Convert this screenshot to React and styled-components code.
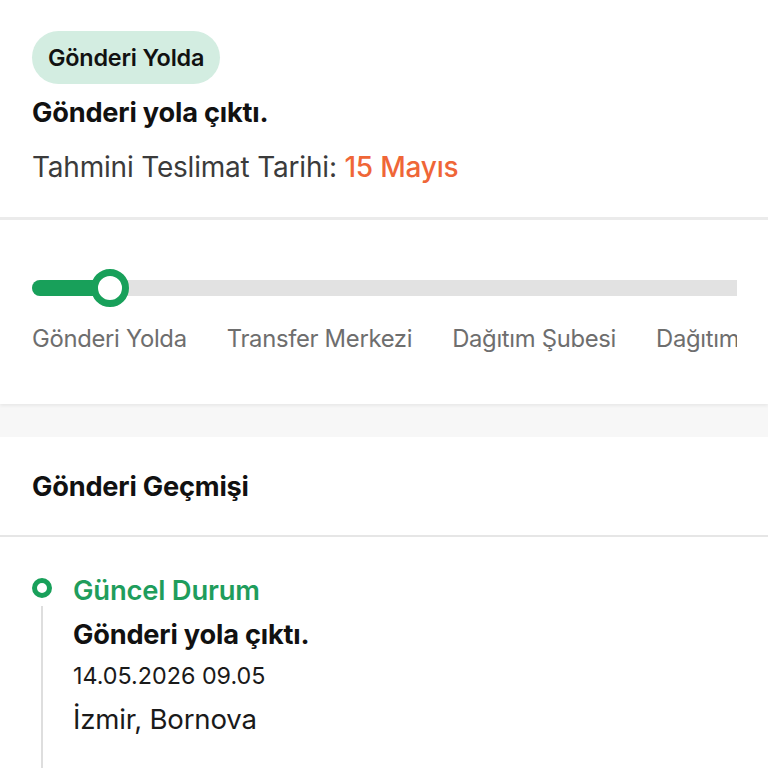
import React from 'react'
import styled, { createGlobalStyle } from 'styled-components';

const GlobalStyle = createGlobalStyle`
  html, body {
    margin: 0;
    padding: 0;
    background: #ffffff;
    font-family: Inter, "Noto Sans", sans-serif;
    color: #111111;
  }
`;

const steps = ['Gönderi Yolda', 'Transfer Merkezi', 'Dağıtım Şubesi', 'Dağıtımda', 'Teslim Edildi'];

const App = () => {
  return (
    <>
      <GlobalStyle />
      <Sayfa>
        <Ozet>
          <Rozet>Gönderi Yolda</Rozet>
          <Baslik>Gönderi yola çıktı.</Baslik>
          <Tahmin>
            Tahmini Teslimat Tarihi: <Tarih>15 Mayıs</Tarih>
          </Tahmin>
        </Ozet>

        <Ilerleme>
          <Ray>
            <Dolgu $oran={11}>
              <Nokta />
            </Dolgu>
          </Ray>
          <Adimlar>
            {steps.map((s) => (
              <Adim key={s}>{s}</Adim>
            ))}
          </Adimlar>
        </Ilerleme>

        <Ara />

        <GecmisBaslik>Gönderi Geçmişi</GecmisBaslik>

        <Zaman>
          <Olay>
            <Isaret>
              <Halka />
              <Cizgi />
            </Isaret>
            <OlayIcerik>
              <Durum>Güncel Durum</Durum>
              <OlayBaslik>Gönderi yola çıktı.</OlayBaslik>
              <OlayTarih>14.05.2026 09.05</OlayTarih>
              <OlayYer>İzmir, Bornova</OlayYer>
            </OlayIcerik>
          </Olay>
        </Zaman>
      </Sayfa>
    </>
  )
}

export default App;

const Sayfa = styled.div`
width: 768px;
min-height: 768px;
overflow: hidden;
background: #fff;
`;

const Ozet = styled.section`
display: flex;
flex-direction: column;
align-items: flex-start;
padding: 31px 32px 0 32px;
height: 186px;
border-bottom: 3px solid #ebebeb;
`;

const Rozet = styled.div`
display: flex;
align-items: center;
height: 53px;
padding: 0 16px 0 16px;
border-radius: 27px;
background: #d3ede1;
font-size: 23.4px;
font-weight: 600;
letter-spacing: -0.2px;
color: #111;
`;

const Baslik = styled.div`
margin-top: 13px;
font-size: 27.2px;
font-weight: 700;
letter-spacing: -0.2px;
line-height: 32px;
`;

const Tahmin = styled.div`
margin-top: 22px;
font-size: 28px;
line-height: 32px;
letter-spacing: -0.2px;
color: #3b3b3b;
`;

const Tarih = styled.span`
color: #ef6637;
font-weight: 500;
`;

const Ilerleme = styled.section`
padding: 60px 31px 0 32px;
height: 124px;
box-shadow: 0 2px 3px rgba(0,0,0,.06);
position: relative;
z-index: 1;
`;

const Ray = styled.div`
height: 16px;
border-radius: 8px 0 0 8px;
background: #e2e2e2;
`;

const Dolgu = styled.div`
position: relative;
height: 100%;
width: ${p => p.$oran}%;
border-radius: 8px;
background: #18a05a;
`;

const Nokta = styled.span`
position: absolute;
right: -19px;
top: 50%;
width: 24px;
height: 24px;
margin-top: -19px;
border-radius: 50%;
border: 7px solid #18a05a;
background: #fff;
`;

const Adimlar = styled.div`
display: flex;
gap: 40px;
margin-top: 28px;
white-space: nowrap;
overflow: hidden;
`;

const Adim = styled.span`
font-size: 23.8px;
line-height: 30px;
color: #6e6e6e;
letter-spacing: -0.3px;
flex-shrink: 0;
`;

const Ara = styled.div`
height: 33px;
background: #f7f7f7;
`;

const GecmisBaslik = styled.div`
display: flex;
align-items: center;
height: 98px;
padding: 0 32px;
font-size: 27.2px;
font-weight: 700;
letter-spacing: -0.2px;
border-bottom: 2px solid #e6e6e6;
`;

const Zaman = styled.div`
padding: 36px 32px 0 32px;
`;

const Olay = styled.div`
display: flex;
gap: 21px;
`;

const Isaret = styled.div`
display: flex;
flex-direction: column;
align-items: center;
width: 20px;
padding-top: 5px;
`;

const Halka = styled.span`
width: 10px;
height: 10px;
border-radius: 50%;
border: 5.5px solid #18a05a;
`;

const Cizgi = styled.span`
width: 2px;
flex: 1;
min-height: 170px;
margin-top: 8px;
background: #dedede;
`;

const OlayIcerik = styled.div`
display: flex;
flex-direction: column;
`;

const Durum = styled.div`
font-size: 27.4px;
font-weight: 600;
line-height: 34px;
letter-spacing: -0.2px;
color: #1f9d5c;
`;

const OlayBaslik = styled.div`
margin-top: 12px;
font-size: 27.2px;
font-weight: 700;
letter-spacing: -0.2px;
line-height: 32px;
`;

const OlayTarih = styled.div`
margin-top: 10px;
font-size: 23.3px;
line-height: 30px;
color: #1a1a1a;
`;

const OlayYer = styled.div`
margin-top: 12px;
font-size: 27.6px;
line-height: 32px;
letter-spacing: -0.2px;
color: #1a1a1a;
`;
